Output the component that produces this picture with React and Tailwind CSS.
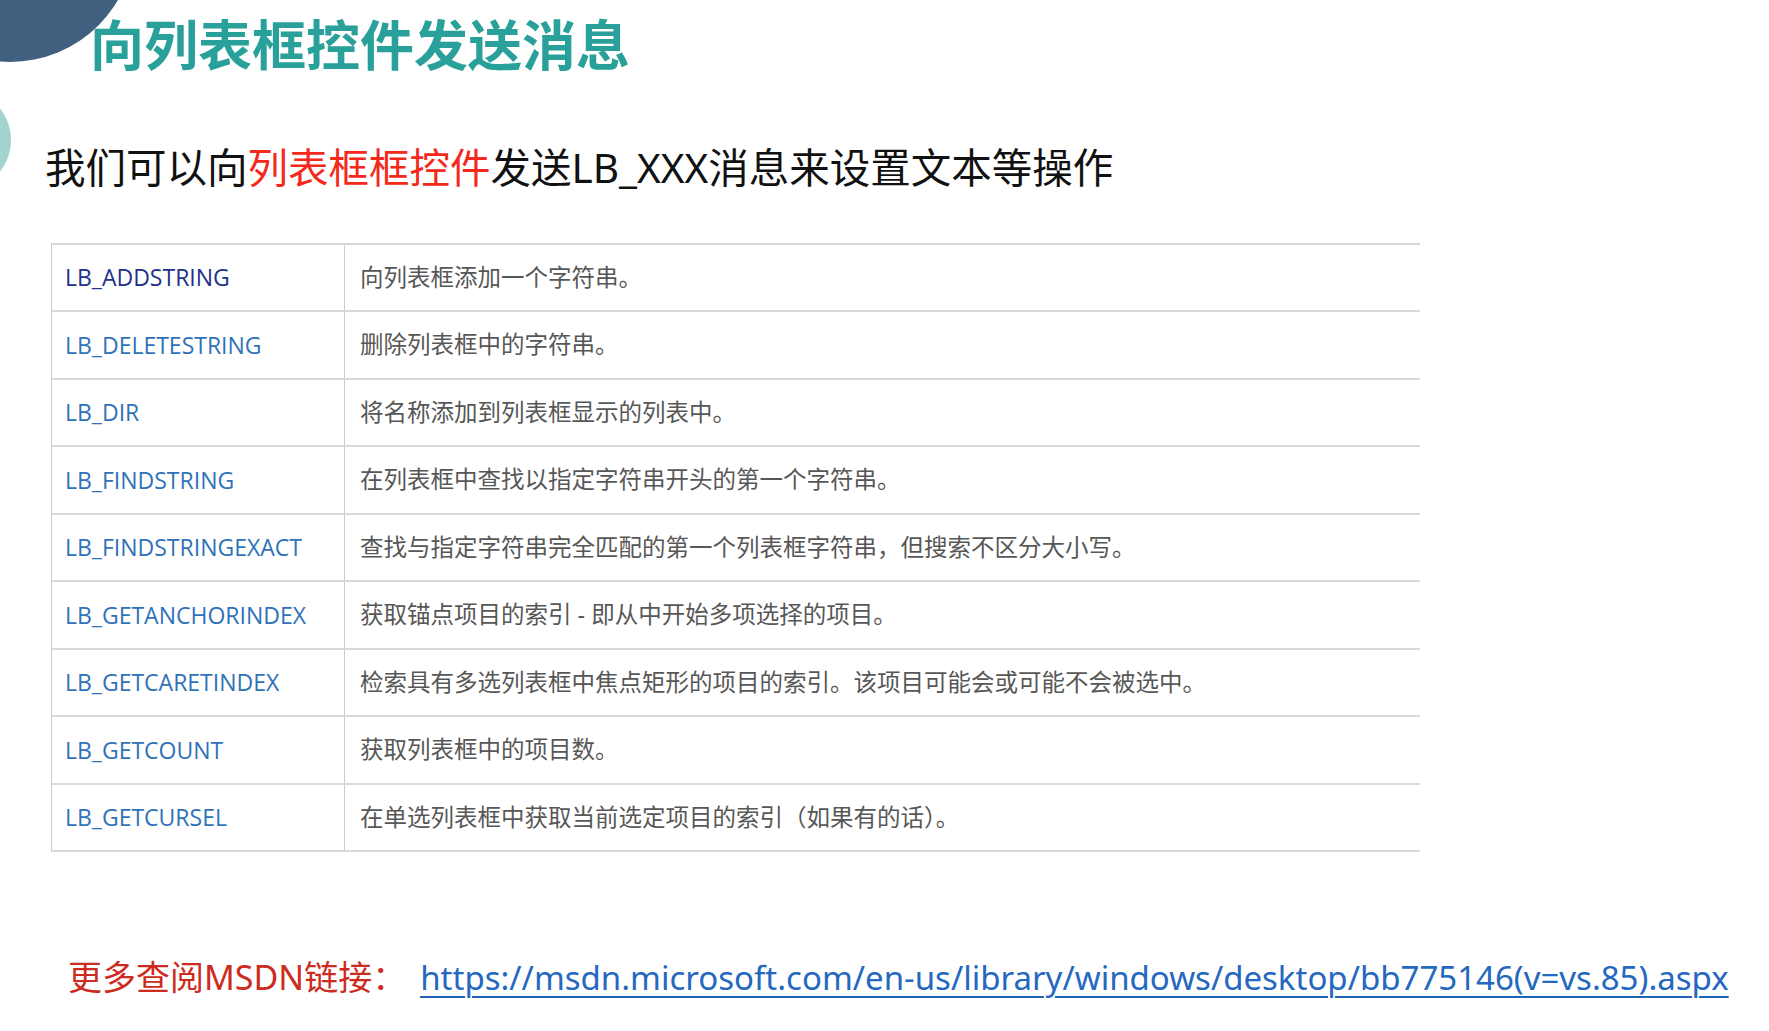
import React from "react";

const rows = [
  ["LB_ADDSTRING", "向列表框添加一个字符串。", true],
  ["LB_DELETESTRING", "删除列表框中的字符串。"],
  ["LB_DIR", "将名称添加到列表框显示的列表中。"],
  ["LB_FINDSTRING", "在列表框中查找以指定字符串开头的第一个字符串。"],
  ["LB_FINDSTRINGEXACT", "查找与指定字符串完全匹配的第一个列表框字符串，但搜索不区分大小写。"],
  ["LB_GETANCHORINDEX", "获取锚点项目的索引 - 即从中开始多项选择的项目。"],
  ["LB_GETCARETINDEX", "检索具有多选列表框中焦点矩形的项目的索引。该项目可能会或可能不会被选中。"],
  ["LB_GETCOUNT", "获取列表框中的项目数。"],
  ["LB_GETCURSEL", "在单选列表框中获取当前选定项目的索引（如果有的话）。"],
];

export default function App() {
  return (
    <div className="relative w-full h-[1031px] bg-white overflow-hidden font-['Noto_Sans','Noto_Sans_CJK_SC',sans-serif]">
      {/* decorative circles */}
      <div className="absolute left-[-115px] top-[-188px] w-[250px] h-[250px] rounded-full bg-[#41607f]" />
      <div className="absolute left-[-91px] top-[89px] w-[102px] h-[102px] rounded-full bg-[#a3d3cf]" />

      <div className="relative flex flex-col">
        <h1 className="pl-[90px] pt-[16px] text-[54px] leading-none font-bold text-[#29a19a] font-['Noto_Sans_CJK_SC',sans-serif]">
          向列表框控件发送消息
        </h1>

        <p className="pl-[45px] mt-[78px] text-[40.5px] leading-none text-[#111111] font-['Noto_Sans','Noto_Sans_CJK_SC',sans-serif]">
          我们可以向<span className="text-[#f4281b]">列表框框控件</span>发送LB_XXX消息来设置文本等操作
        </p>

        <div className="ml-[51px] mt-[54px] w-[1369px] border-l border-t-2 border-[#d6d6d6] border-l-[#cdcdcd]">
          {rows.map(([name, desc, visited]) => (
            <div key={name} className="flex h-[67.5px] border-b-2 border-[#d9d9d9]">
              <div className="w-[293px] shrink-0 flex items-center pl-[13px] border-r border-[#cdcdcd]">
                <span
                  className={
                    "text-[23px] font-medium font-['Open_Sans',sans-serif] " +
                    (visited ? "text-[#22318a]" : "text-[#2f72b8]")
                  }
                >
                  {name}
                </span>
              </div>
              <div className="flex items-center pl-[15px] text-[23.5px] text-[#575757] font-['Noto_Sans','Noto_Sans_CJK_SC',sans-serif]">
                {desc}
              </div>
            </div>
          ))}
        </div>

        <div className="pl-[68px] mt-[108px] flex items-center text-[34px] leading-none font-['Noto_Sans','Noto_Sans_CJK_SC',sans-serif]">
          <span className="text-[#cc2b20]">更多查阅MSDN链接：</span>
          <a
            href="#"
            className="ml-[14px] text-[33px] text-[#2468c0] underline decoration-2 decoration-[#1f63b8] underline-offset-[6px]"
          >
            https://msdn.microsoft.com/en-us/library/windows/desktop/bb775146(v=vs.85).aspx
          </a>
        </div>
      </div>
    </div>
  );
}
